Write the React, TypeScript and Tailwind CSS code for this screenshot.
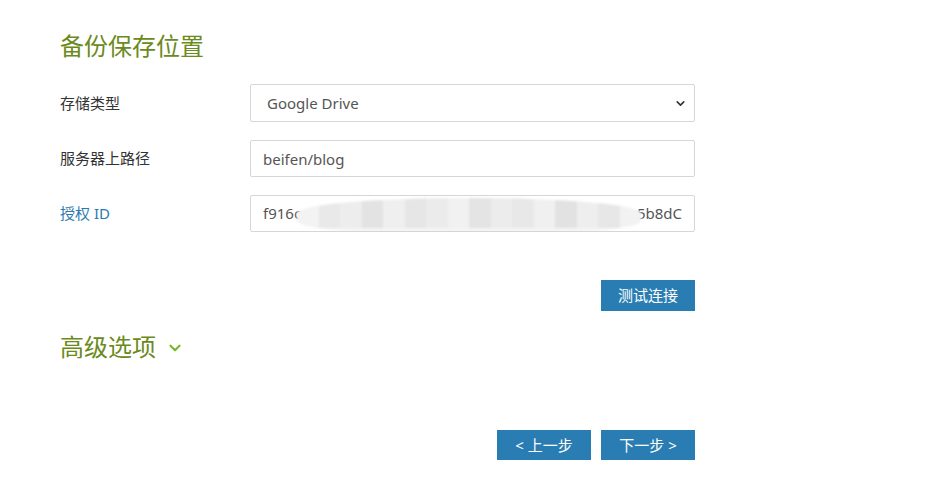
import { ChevronDown } from "lucide-react";

const font = "[font-family:'Noto_Sans','Noto_Sans_CJK_SC',sans-serif]";

// mosaic cells covering the middle of the token
const mosaic = ["#f3f3f3", "#e9e9e9", "#ededed", "#e3e3e3", "#efefef", "#e6e6e6", "#ebebeb", "#f1f1f1", "#e4e4e4", "#ececec", "#e8e8e8", "#f0f0f0", "#e2e2e2", "#eeeeee", "#e7e7e7", "#f2f2f2"];

const Label = ({ children, blue }: { children: React.ReactNode; blue?: boolean }) => (
  <div className={`w-[190px] shrink-0 text-[15px] ${blue ? "text-[#2a7ab0]" : "text-[#333]"}`}>{children}</div>
);

export default function App() {
  return (
    <div className={`bg-white w-[926px] h-[486px] ${font} pl-[60px] pt-[28px]`}>
      <h2 className="text-[24px] leading-[36px] text-[#6b8a1c]">备份保存位置</h2>

      <div className="mt-[20px] flex flex-col gap-[18px] w-[635px]">
        <div className="flex items-center">
          <Label>存储类型</Label>
          <div className="relative w-[445px] h-[38px]">
            <select
              defaultValue="gd"
              className="appearance-none w-full h-full border border-[#d6d6d6] rounded-[2px] pl-[16px] text-[15px] text-[#555] bg-white outline-none"
            >
              <option value="gd">Google Drive</option>
            </select>
            <ChevronDown className="absolute right-[8px] top-[13px] w-[13px] h-[13px] text-[#333]" strokeWidth={3} />
          </div>
        </div>

        <div className="flex items-center">
          <Label>服务器上路径</Label>
          <input
            defaultValue="beifen/blog"
            className="w-[445px] h-[37px] border border-[#d6d6d6] rounded-[2px] px-[12px] text-[15px] text-[#555] outline-none"
          />
        </div>

        <div className="flex items-center">
          <Label blue>授权 ID</Label>
          <div className="relative w-[445px] h-[37px] border border-[#d6d6d6] rounded-[2px] px-[12px] flex items-center justify-between text-[15px] text-[#555] overflow-hidden">
            <span>f916c</span>
            <span>.5b8dC</span>
            <div className="absolute left-[46px] top-[2px] w-[344px] h-[38px] flex blur-[1px] rounded-[50%/40%] overflow-hidden bg-[#f4f4f4]">
              {mosaic.map((c, i) => (
                <div key={i} className="flex-1 h-[30px]" style={{ background: c }} />
              ))}
            </div>
          </div>
        </div>
      </div>

      <div className="w-[635px] flex justify-end mt-[48px]">
        <button className="w-[94px] h-[31px] bg-[#2a7db3] text-white text-[15px]">测试连接</button>
      </div>

      <div className="flex items-center gap-[10px] mt-[18px]">
        <h2 className="text-[24px] leading-[36px] text-[#6b8a1c]">高级选项</h2>
        <ChevronDown className="w-[18px] h-[18px] text-[#7cb82f] mt-[2px]" strokeWidth={3} />
      </div>

      <div className="w-[635px] flex justify-end gap-[10px] mt-[65px]">
        <button className="w-[94px] h-[30px] bg-[#2a7db3] text-white text-[15px]">&lt; 上一步</button>
        <button className="w-[94px] h-[30px] bg-[#2a7db3] text-white text-[15px]">下一步 &gt;</button>
      </div>
    </div>
  );
}
